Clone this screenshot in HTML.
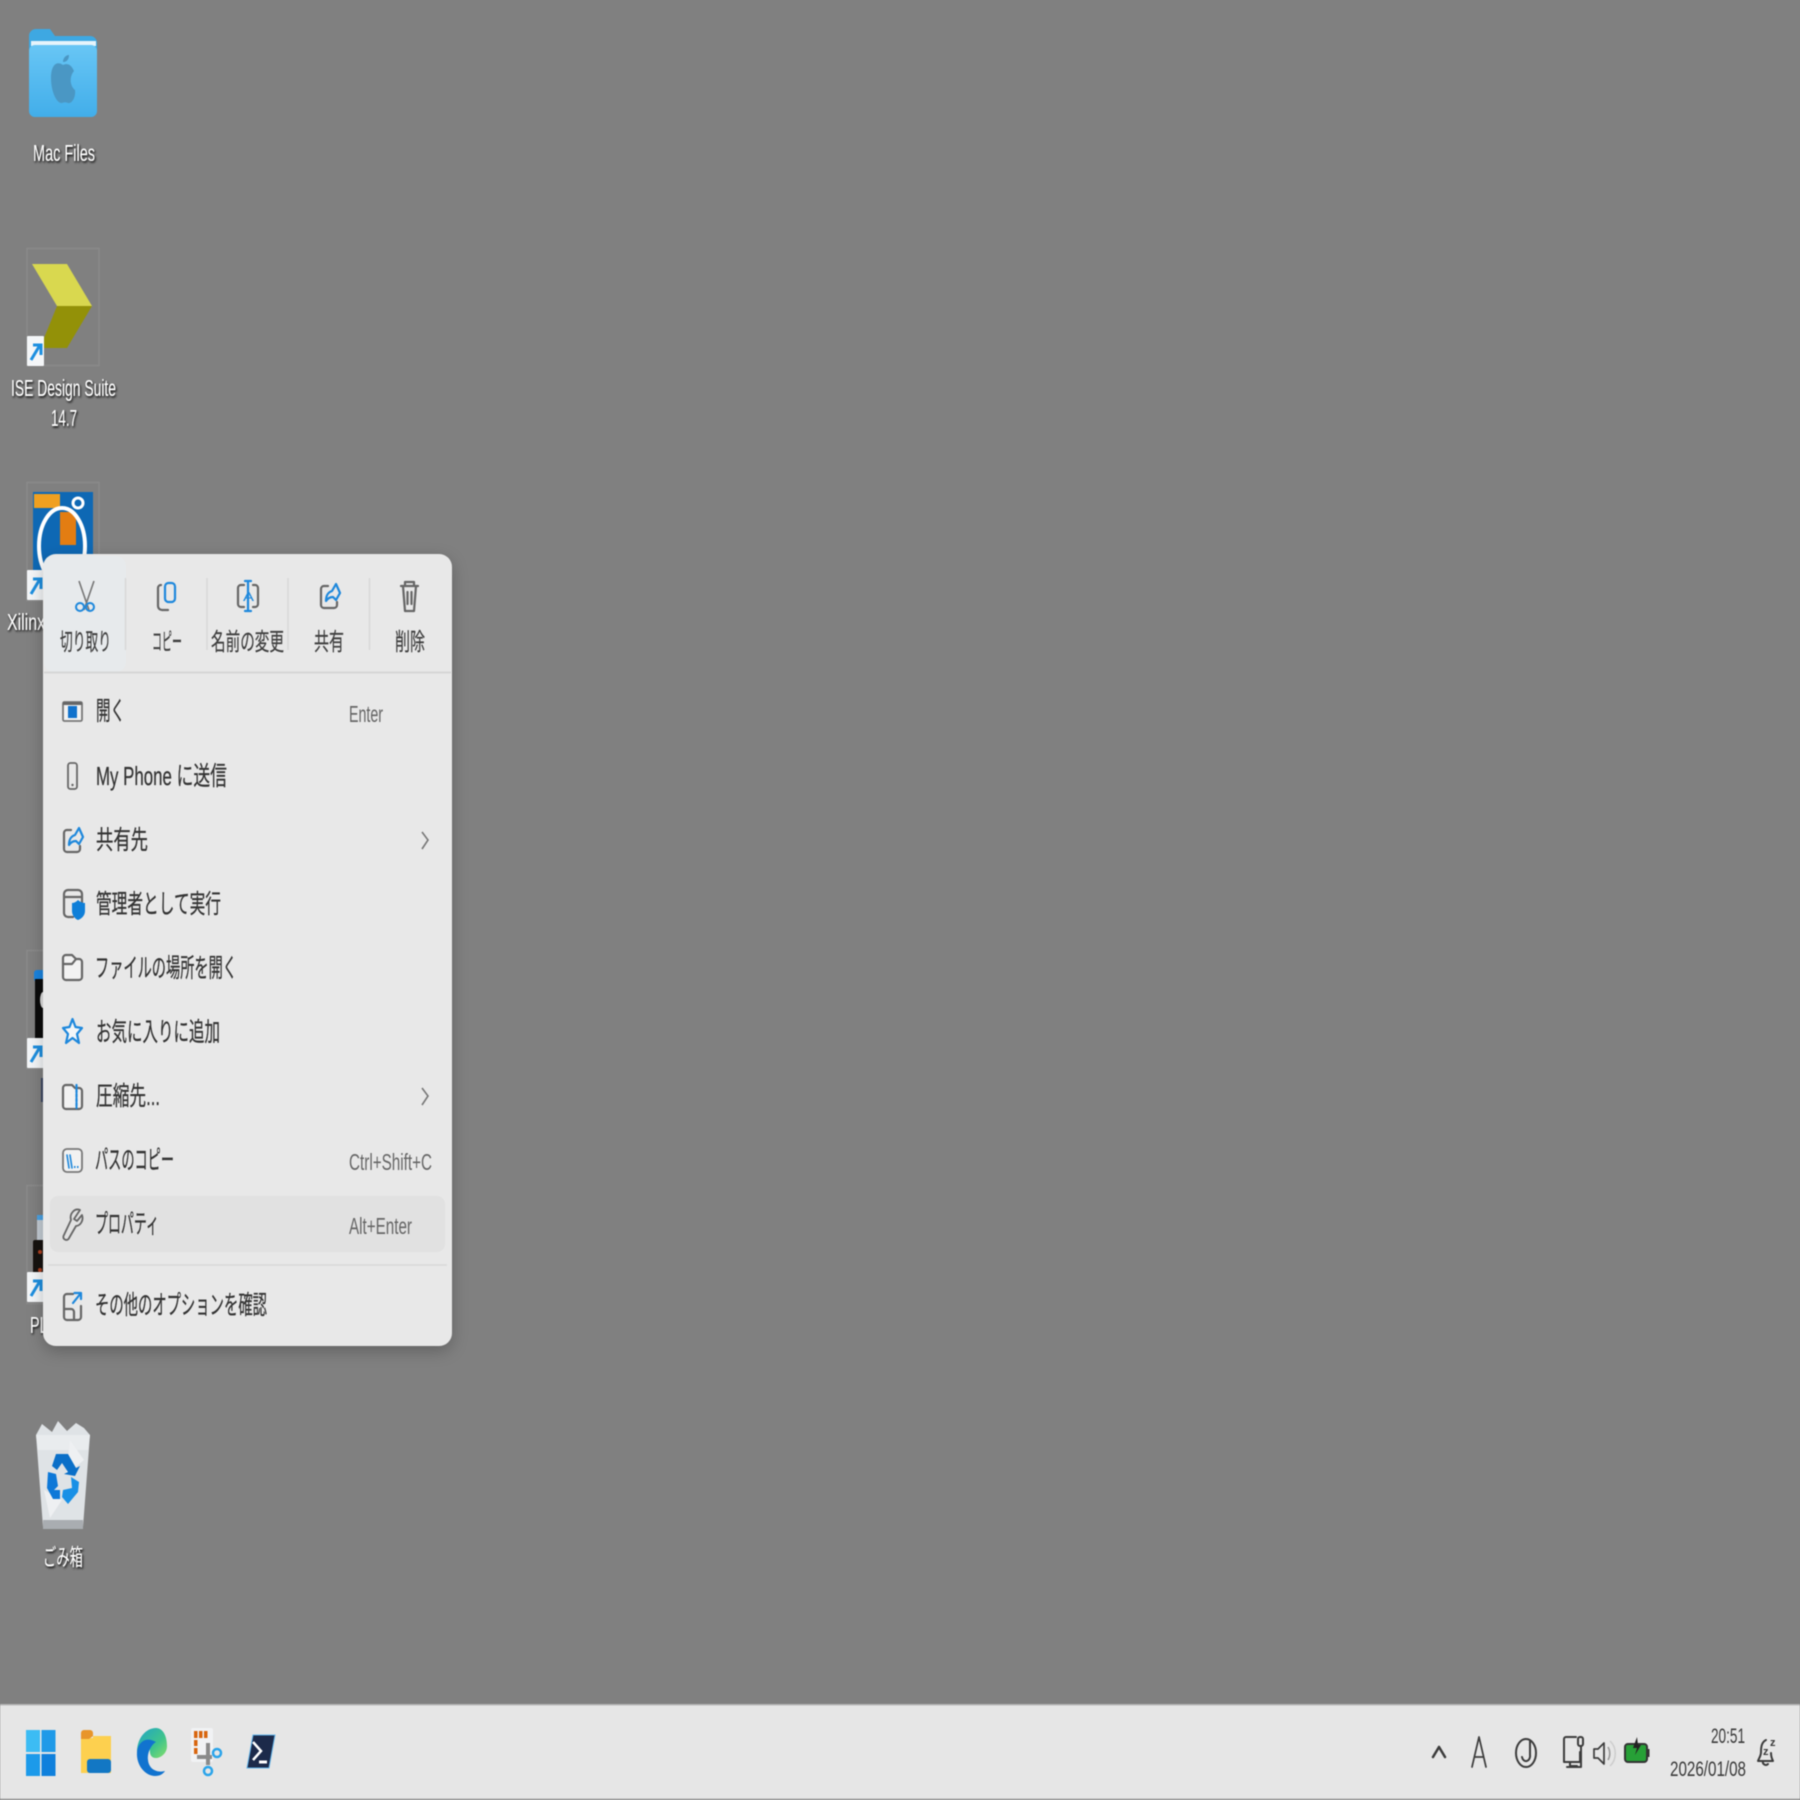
<!DOCTYPE html>
<html lang="ja"><head><meta charset="utf-8"><title>Desktop</title>
<style>
html,body{margin:0;padding:0;width:1800px;height:1800px;overflow:hidden;background:#808080}
svg{display:block;position:absolute;left:0;top:0;filter:blur(.45px)}
text{font-family:"Liberation Sans","Noto Sans CJK JP",sans-serif}
.d{fill:#fff;font-size:23px;filter:url(#ts)}
.m{fill:#333;font-size:26px;stroke:#333;stroke-width:.25}
.t{fill:#3f3f3f;font-size:24px;stroke:#3f3f3f;stroke-width:.2}
.s{fill:#666;font-size:23px}
.g{fill:none;stroke:#666;stroke-width:2.2;stroke-linejoin:round;stroke-linecap:round}
.b{fill:none;stroke:#1e88dc;stroke-width:2.2;stroke-linejoin:round;stroke-linecap:round}
.k{fill:none;stroke:#3c3c3c;stroke-width:2;stroke-linejoin:round;stroke-linecap:round}
</style></head><body>
<svg width="1800" height="1800" viewBox="0 0 1800 1800" xmlns="http://www.w3.org/2000/svg">
<defs>
<filter id="ts" x="-20%" y="-30%" width="140%" height="170%"><feDropShadow dx="1" dy="1.5" stdDeviation="1" flood-color="#000" flood-opacity="1"/></filter>
<filter id="ms" x="-10%" y="-5%" width="120%" height="110%"><feDropShadow dx="0" dy="5" stdDeviation="8" flood-color="#000" flood-opacity=".24"/></filter>
<linearGradient id="fold" x1="0" y1="0" x2="0" y2="1"><stop offset="0" stop-color="#68c6f5"/><stop offset="1" stop-color="#42aeea"/></linearGradient>
<linearGradient id="edge" x1="0" y1="0" x2="1" y2="1"><stop offset="0" stop-color="#1fa3c8"/><stop offset=".6" stop-color="#3fc48c"/><stop offset="1" stop-color="#86df6a"/></linearGradient>
<g id="badge"><rect x="27" y="0" width="17" height="30" rx="1" fill="#f4f6f8"/><path d="M31 24 L40 9 M33 9 H41 V19" fill="none" stroke="#1d8fe0" stroke-width="3"/></g>
<g id="share"><path d="M8 3 H4 a3 3 0 0 0-3 3 V22 a3 3 0 0 0 3 3 H14 a3 3 0 0 0 3-3 V19" class="g"/><path d="M6 18 C6 11 9 9 12 8 L16 1 L20 10 L16 17 L13 14 C10 14 8 15 6 18Z" class="b"/></g>
</defs>

<rect width="1800" height="1800" fill="#808080"/>

<!-- Mac Files -->
<path d="M29 36 a7 7 0 0 1 7-7 H50 l5 7 H90 a7 7 0 0 1 7 7 V110 a7 7 0 0 1-7 7 H36 a7 7 0 0 1-7-7Z" fill="#3ea8e2"/>
<rect x="31" y="41" width="65" height="5" fill="#e6f4fb"/>
<rect x="29" y="45" width="68" height="72" rx="6" fill="url(#fold)"/>
<path d="M63 65 C56 60 51 66 51 78 C51 92 57 104 62 103 C64 102 66 102 68 103 C72 104 76 97 75 90 C70 86 69 77 74 71 C71 64 67 63 63 65Z M63 62 C63 58 66 55 69 55 C69 59 67 62 63 62Z" fill="#4a97c4"/>
<text class="d" x="33" y="161" textLength="62" lengthAdjust="spacingAndGlyphs">Mac Files</text>

<!-- ISE -->
<rect x="27" y="248.500" width="72" height="117" fill="none" stroke="#8a8a8a" stroke-width="1.500"/>
<polygon points="32,264 67,264 92,306 57,306" fill="#d9d84f"/>
<polygon points="57,306 92,306 67,348 40,348" fill="#939108"/>
<use href="#badge" y="336"/>
<text class="d" x="11" y="396" textLength="105" lengthAdjust="spacingAndGlyphs">ISE Design Suite</text>
<text class="d" x="51" y="426" textLength="26" lengthAdjust="spacingAndGlyphs">14.7</text>

<!-- Xilinx -->
<rect x="27" y="482.500" width="72" height="118" fill="none" stroke="#8a8a8a" stroke-width="1.500"/>
<rect x="33" y="492" width="60" height="80" fill="#0e68b4"/>
<rect x="34" y="494" width="26" height="14" fill="#f0a020"/>
<rect x="60" y="512" width="16" height="33" fill="#e37d12"/>
<ellipse cx="62" cy="546" rx="23" ry="38" fill="none" stroke="#fff" stroke-width="4"/>
<circle cx="78" cy="503" r="5" fill="#0e68b4" stroke="#fff" stroke-width="3"/>
<use href="#badge" y="570"/>
<text class="d" x="7" y="630" textLength="92" lengthAdjust="spacingAndGlyphs">Xilinx Design</text>

<!-- hidden shortcut 2 -->
<rect x="27" y="950.500" width="72" height="118" fill="none" stroke="#8a8a8a" stroke-width="1.500"/>
<rect x="34" y="970" width="20" height="12" rx="3" fill="#1a84e0"/>
<rect x="35" y="979" width="20" height="60" fill="#0b0b0b"/>
<ellipse cx="43" cy="1000" rx="3" ry="8" fill="#ddd"/>
<use href="#badge" y="1038"/>
<rect x="41" y="1078" width="4" height="24" fill="#3a4560"/>

<!-- hidden shortcut 3 -->
<rect x="27" y="1185.500" width="72" height="118" fill="none" stroke="#8a8a8a" stroke-width="1.500"/>
<rect x="37" y="1215" width="18" height="26" fill="#c4ccd4"/>
<rect x="37" y="1215" width="18" height="5" fill="#4aa3e6"/>
<rect x="33" y="1240" width="22" height="34" rx="2" fill="#16120f"/>
<circle cx="40" cy="1252" r="2" fill="#b04020"/><circle cx="40" cy="1270" r="2" fill="#b04020"/>
<use href="#badge" y="1272"/>
<text class="d" x="30" y="1333" textLength="28" lengthAdjust="spacingAndGlyphs">PLD</text>

<!-- Recycle bin -->
<polygon points="36,1435 42,1424 52,1432 58,1421 67,1431 76,1423 84,1428 90,1435 83,1527 43,1527" fill="#dfe3e6"/>
<polygon points="36,1435 90,1435 88,1450 38,1450" fill="#e9ecee"/>
<polygon points="43,1520 83,1520 83,1529 43,1529" fill="#a9adb1"/>
<polygon points="44,1490 62,1500 50,1518" fill="#eef0f2"/>
<polygon points="70,1440 84,1460 66,1475" fill="#eef0f2"/>
<path d="M56 1454 H68 L76 1468 L80 1466 L75 1476 L64 1474 L68 1472 L62 1463 L57 1470 L52 1466Z" fill="#0a6fc8"/>
<path d="M71 1477 L79 1482 L78 1492 L68 1504 L62 1497 L63 1490 L72 1488Z" fill="#1890e6"/>
<path d="M48 1472 L56 1474 L58 1486 L54 1490 H60 V1499 H53 L47 1488Z" fill="#0d78d8"/>
<text class="d" x="43" y="1565" textLength="40" lengthAdjust="spacingAndGlyphs">ごみ箱</text>

<!-- Context menu -->
<rect x="43" y="554" width="409" height="792" rx="13" fill="#e8e8e8" filter="url(#ms)"/>
<rect x="44" y="556" width="82" height="116" rx="10" fill="#e7eaec"/>
<g stroke="#d8d8d8" stroke-width="1.500">
<path d="M125.500 578 V650 M207 578 V650 M288 578 V650 M369.500 578 V650"/>
</g>
<path d="M44 672.500 H451" stroke="#d6d6d6" stroke-width="2"/>

<!-- toolbar icons -->
<path d="M79 581 L89 610 M94 581 L84 610" stroke="#777" stroke-width="1.600" fill="none"/>
<circle cx="80" cy="607" r="4" fill="none" stroke="#1e88dc" stroke-width="2"/>
<circle cx="90" cy="607" r="4" fill="none" stroke="#1e88dc" stroke-width="2"/>

<path d="M161 585 a3 3 0 0 0-3 3 V606 a4 4 0 0 0 4 4 H168" class="g"/>
<rect x="165" y="583" width="10" height="19" rx="3.500" class="b"/>

<path d="M244 585 H241 a3 3 0 0 0-3 3 V604 a3 3 0 0 0 3 3 H244 M253 585 H255 a3 3 0 0 1 3 3 V604 a3 3 0 0 1-3 3 H253" class="g"/>
<path d="M248 581 V611 M245 581 H251 M245 611 H251" class="b"/>
<text x="243" y="601" font-size="13" fill="#1e88dc" textLength="11" lengthAdjust="spacingAndGlyphs">A</text>

<use href="#share" transform="translate(320,583)"/>

<path d="M401 586 H418 M405 586 V582 H414 V586 M403 586 L405 611 H414 L416 586 M407.500 592 V604 M411.500 592 V604" class="g" stroke-width="1.800"/>

<!-- toolbar labels -->
<text class="t" x="60" y="650" textLength="51" lengthAdjust="spacingAndGlyphs">切り取り</text>
<text class="t" x="152" y="650" textLength="30" lengthAdjust="spacingAndGlyphs">コピー</text>
<text class="t" x="211" y="650" textLength="73" lengthAdjust="spacingAndGlyphs">名前の変更</text>
<text class="t" x="314" y="650" textLength="30" lengthAdjust="spacingAndGlyphs">共有</text>
<text class="t" x="395" y="650" textLength="30" lengthAdjust="spacingAndGlyphs">削除</text>

<!-- highlight -->
<rect x="50" y="1196" width="395" height="56" rx="8" fill="#e1e1e1"/>
<path d="M48 1265 H447" stroke="#dcdcdc" stroke-width="2"/>

<!-- item icons -->
<rect x="63" y="702" width="19" height="19" rx="1.500" fill="#f2f2f2" stroke="#777" stroke-width="1.800"/>
<rect x="63" y="702" width="19" height="3" fill="#666"/>
<rect x="68" y="706" width="9" height="12" fill="#1172cc"/>

<rect x="68" y="763" width="9" height="26" rx="2.500" class="g" style="stroke-width:1.800"/>
<circle cx="72.500" cy="785" r="1.200" fill="#666"/>

<use href="#share" transform="translate(63,827)"/>

<path d="M82 905 V894 a4 4 0 0 0-4-4 H68 a4 4 0 0 0-4 4 V913 a4 4 0 0 0 4 4 H73 M64 897 H82" class="g"/>
<path d="M78 900 C80 902 83 903 85 903 V911 C85 916 81 919 78 920 C75 919 72 915 72 911 V903 C74 903 76 902 78 900Z" fill="#0f7fd8"/>

<path d="M63 958 a3 3 0 0 1 3-3 H72 L76 959 H79 a3 3 0 0 1 3 3 V977 a3 3 0 0 1-3 3 H66 a3 3 0 0 1-3-3Z" class="g" style="fill:#f2f2f2"/>
<path d="M64 964 H72 L76 959" class="g"/>

<path d="M72.500 1019 L75.500 1027 L82 1028 L77 1034 L79 1043 L72.500 1038 L66 1043 L68 1034 L63 1028 L69.500 1027Z" class="b" style="fill:#f3f6f8"/>

<path d="M63 1088 a3 3 0 0 1 3-3 H72 L75 1088 H79 a3 3 0 0 1 3 3 V1106 a3 3 0 0 1-3 3 H66 a3 3 0 0 1-3-3Z" class="g" style="fill:#f2f2f2"/>
<path d="M76.500 1085 V1108" class="b" stroke-dasharray="3 1.500"/>

<rect x="63" y="1149" width="19" height="23" rx="4" fill="#f2f2f2" stroke="#777" stroke-width="1.800"/>
<path d="M67 1155 L69 1168 M70 1155 L72 1168" class="b" style="stroke-width:1.600"/>
<path d="M74 1167 H79" stroke="#1e88dc" stroke-width="2" stroke-dasharray="1.500 1.500"/>

<path d="M80 1210 a7 8 0 0 0-9 10 L63.500 1236 a3 3 0 0 0 5 3 L76 1226 a7 8 0 0 0 6-11 L77 1221 L74 1219Z" class="g" style="stroke-width:1.800"/>

<path d="M73 1294 H67 a3 3 0 0 0-3 3 V1317 a3 3 0 0 0 3 3 H78 a3 3 0 0 0 3-3 V1306 M64 1309 H71 a3 3 0 0 1 3 3 V1320" class="g"/>
<path d="M73 1303 L81 1293 M74.500 1293 H81 V1299" class="b"/>

<!-- items -->
<text class="m" x="96" y="720" textLength="29" lengthAdjust="spacingAndGlyphs">開く</text>
<text class="m" x="96" y="785" textLength="131" lengthAdjust="spacingAndGlyphs">My Phone に送信</text>
<text class="m" x="96" y="849" textLength="52" lengthAdjust="spacingAndGlyphs">共有先</text>
<text class="m" x="96" y="913" textLength="125" lengthAdjust="spacingAndGlyphs">管理者として実行</text>
<text class="m" x="95" y="977" textLength="142" lengthAdjust="spacingAndGlyphs">ファイルの場所を開く</text>
<text class="m" x="96" y="1041" textLength="124" lengthAdjust="spacingAndGlyphs">お気に入りに追加</text>
<text class="m" x="96" y="1105" textLength="64" lengthAdjust="spacingAndGlyphs">圧縮先...</text>
<text class="m" x="95" y="1169" textLength="79" lengthAdjust="spacingAndGlyphs">パスのコピー</text>
<text class="m" x="95" y="1233" textLength="64" lengthAdjust="spacingAndGlyphs">プロパティ</text>
<text class="m" x="95" y="1314" textLength="172" lengthAdjust="spacingAndGlyphs">その他のオプションを確認</text>

<text class="s" x="349" y="722" textLength="34" lengthAdjust="spacingAndGlyphs">Enter</text>
<text class="s" x="349" y="1170" textLength="83" lengthAdjust="spacingAndGlyphs">Ctrl+Shift+C</text>
<text class="s" x="349" y="1234" textLength="63" lengthAdjust="spacingAndGlyphs">Alt+Enter</text>

<path d="M422 832 L428 840 L422 849 M422 1088 L428 1096 L422 1105" fill="none" stroke="#777" stroke-width="1.600"/>

<!-- Taskbar -->
<rect x="0" y="1704" width="1800" height="96" fill="#e6e6e6"/>
<rect x="0" y="1704" width="1800" height="1.500" fill="#b8b8b8"/>
<rect x="0" y="1798.500" width="1800" height="1.500" fill="#a8a8a8"/>

<!-- start -->
<rect x="26" y="1730" width="14" height="22" fill="#3cbcf4"/>
<rect x="41.500" y="1730" width="14" height="22" fill="#1f9ae8"/>
<rect x="26" y="1754" width="14" height="22" fill="#1c9aea"/>
<rect x="41.500" y="1754" width="14" height="22" fill="#0f80dc"/>

<!-- explorer -->
<path d="M81 1733 a3 3 0 0 1 3-3 H90 a3 3 0 0 1 3 3 V1736 H81Z" fill="#e8952a"/>
<path d="M81 1738 H93 V1736 H111 V1773 H81Z" fill="#fdd04f"/>
<path d="M81 1736 H93 L89 1739 H81Z" fill="#e8952a"/>
<rect x="87" y="1759" width="24" height="14" rx="3" fill="#1277c4"/>

<!-- edge -->
<path d="M137 1752 C137 1738 146 1728 156 1728 C164 1728 167 1738 167 1746 C167 1754 160 1758 156 1758 C151 1758 150 1754 150 1752 C150 1747 147 1744 142 1746 Z" fill="url(#edge)"/>
<path d="M137 1752 C136 1766 146 1776 155 1776 C160 1776 163 1774 165 1771 C158 1773 149 1770 148 1760 C147 1752 152 1744 156 1742 C146 1736 138 1742 137 1752Z" fill="#1173cf"/>

<!-- snip -->
<rect x="191" y="1728" width="22" height="34" rx="2" fill="#f1f2f4"/>
<g fill="#d8650e"><rect x="194" y="1731" width="3.500" height="7"/><rect x="199" y="1731" width="3.500" height="7"/><rect x="204" y="1731" width="3.500" height="7"/><rect x="194" y="1740" width="3.500" height="6"/><rect x="194" y="1748" width="3.500" height="6"/></g>
<path d="M208 1743 V1765 M197 1757 H212" stroke="#8a8a8a" stroke-width="4" fill="none"/>
<circle cx="217" cy="1753" r="4" fill="none" stroke="#2aa4ea" stroke-width="2.500"/>
<circle cx="208" cy="1771" r="4" fill="none" stroke="#2aa4ea" stroke-width="2.500"/>

<!-- powershell -->
<polygon points="253,1735 275,1735 269,1768 247,1768" fill="#1c2a4a" stroke="#62b4ea" stroke-width="1"/>
<path d="M253 1742 L261 1751 L253 1760" fill="none" stroke="#fff" stroke-width="2.500"/>
<path d="M259 1762 H267" stroke="#fff" stroke-width="3"/>

<!-- tray -->
<path d="M1433 1757 L1439 1747 L1445 1757" class="k" style="stroke-width:2.500"/>
<path d="M1472 1767 L1479 1737 L1486 1767 M1474.500 1757 H1483.500" class="k" style="stroke-width:1.700"/>
<ellipse cx="1526" cy="1753" rx="10" ry="14" class="k"/>
<path d="M1530 1741 V1755 a4 5 0 0 1-8 2" class="k"/>
<path d="M1576 1737 H1566 a2 2 0 0 0-2 2 V1762 H1580 V1752 M1570 1762 V1766 H1577 M1567 1767 H1580" class="k"/>
<rect x="1578" y="1737" width="5" height="9" rx="2" class="k"/>
<path d="M1581 1746 V1767" class="k"/>
<path d="M1594 1749 H1598 L1604 1743 V1764 L1598 1758 H1594Z" class="k" style="stroke-width:1.700"/>
<path d="M1608 1747 a9 11 0 0 1 0 13" fill="none" stroke="#999" stroke-width="1.600"/>
<path d="M1610 1741 a14 16 0 0 1 0 25" fill="none" stroke="#ccc" stroke-width="1.500"/>
<rect x="1625" y="1744" width="22" height="18" rx="3" fill="#27a037" stroke="#333" stroke-width="2"/>
<rect x="1647" y="1749" width="2.500" height="8" fill="#333"/>
<path d="M1637 1737 L1633 1748 H1637 L1635 1755 L1641 1745 H1638 Z" fill="#222"/>

<text x="1711" y="1743" font-size="21" fill="#3a3a3a" textLength="34" lengthAdjust="spacingAndGlyphs">20:51</text>
<text x="1670" y="1776" font-size="21" fill="#3a3a3a" textLength="76" lengthAdjust="spacingAndGlyphs">2026/01/08</text>

<path d="M1766 1740 C1762 1742 1761 1746 1761 1752 C1761 1756 1759 1758 1758 1761 H1773 C1772 1759 1771 1757 1771 1753" class="k"/>
<path d="M1763 1761 a3 3 0 0 0 5 3" class="k"/>
<text x="1763" y="1755" font-size="11" fill="#3a3a3a" font-weight="bold">z</text>
<text x="1770" y="1746" font-size="11" fill="#3a3a3a" font-weight="bold">z</text>
</svg>
</body></html>
